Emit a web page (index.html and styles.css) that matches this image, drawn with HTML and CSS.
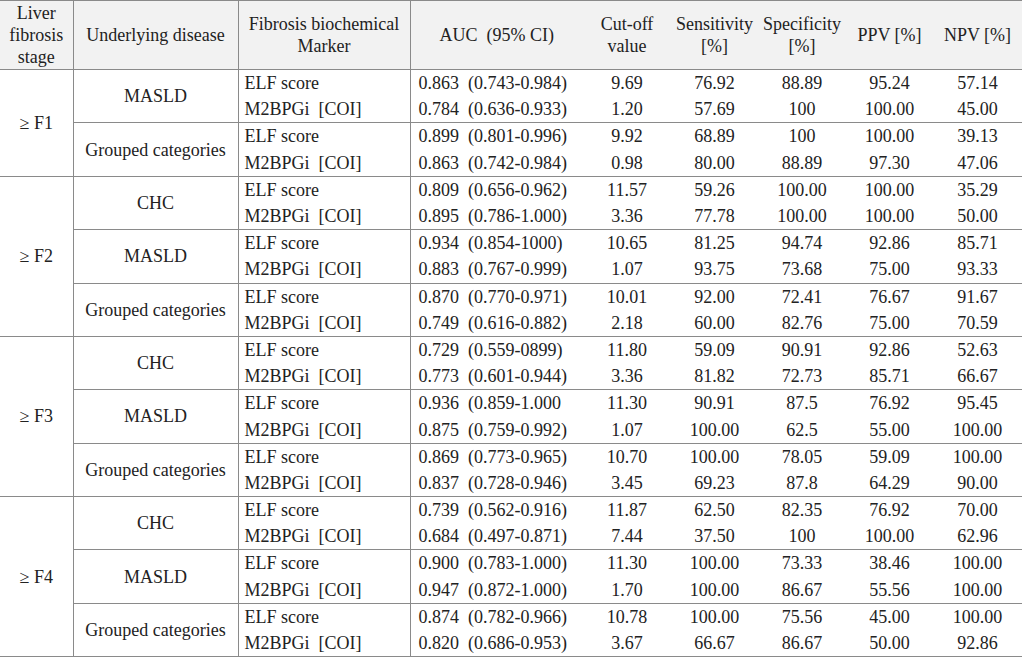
FILE: index.html
```html
<!DOCTYPE html>
<html>
<head>
<meta charset="utf-8">
<link rel="stylesheet" href="styles.css">
</head>
<body>
<table class="tbl">
<colgroup>
<col class="c1"><col class="c2"><col class="c3"><col class="c4"><col class="c5"><col class="c6"><col class="c7"><col class="c8"><col class="c9">
</colgroup>
<thead>
<tr class="hd">
<th class="sep">Liver<br>fibrosis<br>stage</th>
<th class="sep">Underlying disease</th>
<th class="sep">Fibrosis biochemical<br>Marker</th>
<th>AUC&ensp;(95% CI)</th>
<th>Cut-off<br>value</th>
<th>Sensitivity<br>[%]</th>
<th>Specificity<br>[%]</th>
<th>PPV [%]</th>
<th>NPV [%]</th>
</tr>
</thead>
<tbody>
<tr class="g"><td class="sep stage" rowspan="4">≥ F1</td><td class="sep dis" rowspan="2">MASLD</td><td class="sep mk">ELF score</td><td class="auc">0.863&ensp;(0.743-0.984)</td><td>9.69</td><td>76.92</td><td>88.89</td><td>95.24</td><td>57.14</td></tr>
<tr><td class="sep mk">M2BPGi&ensp;[COI]</td><td class="auc">0.784&ensp;(0.636-0.933)</td><td>1.20</td><td>57.69</td><td>100</td><td>100.00</td><td>45.00</td></tr>
<tr class="g"><td class="sep dis" rowspan="2">Grouped categories</td><td class="sep mk">ELF score</td><td class="auc">0.899&ensp;(0.801-0.996)</td><td>9.92</td><td>68.89</td><td>100</td><td>100.00</td><td>39.13</td></tr>
<tr><td class="sep mk">M2BPGi&ensp;[COI]</td><td class="auc">0.863&ensp;(0.742-0.984)</td><td>0.98</td><td>80.00</td><td>88.89</td><td>97.30</td><td>47.06</td></tr>

<tr class="g"><td class="sep stage" rowspan="6">≥ F2</td><td class="sep dis" rowspan="2">CHC</td><td class="sep mk">ELF score</td><td class="auc">0.809&ensp;(0.656-0.962)</td><td>11.57</td><td>59.26</td><td>100.00</td><td>100.00</td><td>35.29</td></tr>
<tr><td class="sep mk">M2BPGi&ensp;[COI]</td><td class="auc">0.895&ensp;(0.786-1.000)</td><td>3.36</td><td>77.78</td><td>100.00</td><td>100.00</td><td>50.00</td></tr>
<tr class="g"><td class="sep dis" rowspan="2">MASLD</td><td class="sep mk">ELF score</td><td class="auc">0.934&ensp;(0.854-1000)</td><td>10.65</td><td>81.25</td><td>94.74</td><td>92.86</td><td>85.71</td></tr>
<tr><td class="sep mk">M2BPGi&ensp;[COI]</td><td class="auc">0.883&ensp;(0.767-0.999)</td><td>1.07</td><td>93.75</td><td>73.68</td><td>75.00</td><td>93.33</td></tr>
<tr class="g"><td class="sep dis" rowspan="2">Grouped categories</td><td class="sep mk">ELF score</td><td class="auc">0.870&ensp;(0.770-0.971)</td><td>10.01</td><td>92.00</td><td>72.41</td><td>76.67</td><td>91.67</td></tr>
<tr><td class="sep mk">M2BPGi&ensp;[COI]</td><td class="auc">0.749&ensp;(0.616-0.882)</td><td>2.18</td><td>60.00</td><td>82.76</td><td>75.00</td><td>70.59</td></tr>

<tr class="g"><td class="sep stage" rowspan="6">≥ F3</td><td class="sep dis" rowspan="2">CHC</td><td class="sep mk">ELF score</td><td class="auc">0.729&ensp;(0.559-0899)</td><td>11.80</td><td>59.09</td><td>90.91</td><td>92.86</td><td>52.63</td></tr>
<tr><td class="sep mk">M2BPGi&ensp;[COI]</td><td class="auc">0.773&ensp;(0.601-0.944)</td><td>3.36</td><td>81.82</td><td>72.73</td><td>85.71</td><td>66.67</td></tr>
<tr class="g"><td class="sep dis" rowspan="2">MASLD</td><td class="sep mk">ELF score</td><td class="auc">0.936&ensp;(0.859-1.000</td><td>11.30</td><td>90.91</td><td>87.5</td><td>76.92</td><td>95.45</td></tr>
<tr><td class="sep mk">M2BPGi&ensp;[COI]</td><td class="auc">0.875&ensp;(0.759-0.992)</td><td>1.07</td><td>100.00</td><td>62.5</td><td>55.00</td><td>100.00</td></tr>
<tr class="g"><td class="sep dis" rowspan="2">Grouped categories</td><td class="sep mk">ELF score</td><td class="auc">0.869&ensp;(0.773-0.965)</td><td>10.70</td><td>100.00</td><td>78.05</td><td>59.09</td><td>100.00</td></tr>
<tr><td class="sep mk">M2BPGi&ensp;[COI]</td><td class="auc">0.837&ensp;(0.728-0.946)</td><td>3.45</td><td>69.23</td><td>87.8</td><td>64.29</td><td>90.00</td></tr>

<tr class="g"><td class="sep stage" rowspan="6">≥ F4</td><td class="sep dis" rowspan="2">CHC</td><td class="sep mk">ELF score</td><td class="auc">0.739&ensp;(0.562-0.916)</td><td>11.87</td><td>62.50</td><td>82.35</td><td>76.92</td><td>70.00</td></tr>
<tr><td class="sep mk">M2BPGi&ensp;[COI]</td><td class="auc">0.684&ensp;(0.497-0.871)</td><td>7.44</td><td>37.50</td><td>100</td><td>100.00</td><td>62.96</td></tr>
<tr class="g"><td class="sep dis" rowspan="2">MASLD</td><td class="sep mk">ELF score</td><td class="auc">0.900&ensp;(0.783-1.000)</td><td>11.30</td><td>100.00</td><td>73.33</td><td>38.46</td><td>100.00</td></tr>
<tr><td class="sep mk">M2BPGi&ensp;[COI]</td><td class="auc">0.947&ensp;(0.872-1.000)</td><td>1.70</td><td>100.00</td><td>86.67</td><td>55.56</td><td>100.00</td></tr>
<tr class="g"><td class="sep dis" rowspan="2">Grouped categories</td><td class="sep mk">ELF score</td><td class="auc">0.874&ensp;(0.782-0.966)</td><td>10.78</td><td>100.00</td><td>75.56</td><td>45.00</td><td>100.00</td></tr>
<tr><td class="sep mk">M2BPGi&ensp;[COI]</td><td class="auc">0.820&ensp;(0.686-0.953)</td><td>3.67</td><td>66.67</td><td>86.67</td><td>50.00</td><td>92.86</td></tr>
</tbody>
</table>
</body>
</html>
```

FILE: styles.css
```css
html, body {
  margin: 0;
  padding: 0;
  background: #ffffff;
}

.tbl {
  width: 1022px;
  table-layout: fixed;
  border-collapse: collapse;
  font-family: "Liberation Serif", "Times New Roman", Times, "DejaVu Serif", serif;
  font-size: 18px;
  color: #222222;
  border-top: 1px solid #8a8a8a;
  border-bottom: 1px solid #8a8a8a;
}

.c1 { width: 73px; }
.c2 { width: 165px; }
.c3 { width: 172px; }
.c4 { width: 173px; }
.c5 { width: 88px; }
.c6 { width: 87px; }
.c7 { width: 88px; }
.c8 { width: 87px; }
.c9 { width: 89px; }

.tbl th {
  font-weight: normal;
  background: #f2f2f2;
  line-height: 22px;
  padding: 0;
  text-align: center;
  vertical-align: middle;
  border-bottom: 1px solid #8a8a8a;
  white-space: nowrap;
}

.hd {
  height: 69px;
}

.tbl tbody tr {
  height: 26.7px;
}

.tbl td {
  padding: 0;
  line-height: 18px;
  text-align: center;
  vertical-align: middle;
  white-space: nowrap;
}

.tbl .sep {
  border-right: 1px solid #8a8a8a;
}

.tbl tr.g td {
  border-top: 1px solid #8a8a8a;
}

.tbl td.mk {
  text-align: left;
  padding-left: 6px;
}

.tbl td.auc {
  text-align: left;
  padding-left: 8px;
}
```
